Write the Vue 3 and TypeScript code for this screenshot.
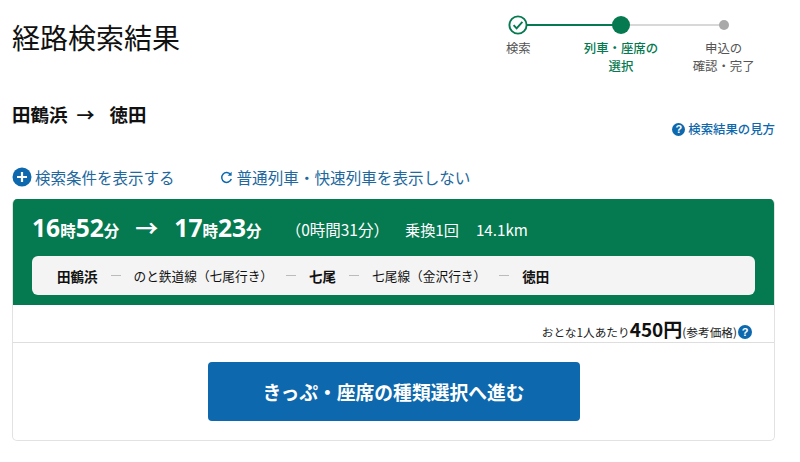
<script setup lang="ts">
interface Step { lines: string[]; state: string }
const steps: Step[] = [
  { lines: ['検索'], state: 'done' },
  { lines: ['列車・座席の', '選択'], state: 'current' },
  { lines: ['申込の', '確認・完了'], state: 'todo' },
]
</script>

<template>
  <div class="page">
    <header class="top">
      <h1 class="title">経路検索結果</h1>
      <div class="stepper">
        <div class="track">
          <span class="seg seg-done"></span>
          <span class="seg seg-todo"></span>
        </div>
        <div class="steps">
          <div v-for="s in steps" :key="s.lines[0]" class="step" :class="s.state">
            <div class="dot-wrap">
              <svg v-if="s.state === 'done'" width="20" height="20" viewBox="0 0 20 20">
                <circle cx="10" cy="10" r="8.6" fill="#fff" stroke="#05794f" stroke-width="1.9" />
                <path d="M5.6 10.2l3 3.2 5.8-6.6" fill="none" stroke="#05794f" stroke-width="1.9" />
              </svg>
              <span v-else class="dot"></span>
            </div>
            <div class="step-label">
              <div v-for="l in s.lines" :key="l">{{ l }}</div>
            </div>
          </div>
        </div>
      </div>
    </header>

    <div class="route-row">
      <div class="route">田鶴浜<span class="route-arrow">→</span>徳田</div>
      <a class="help"><span class="q q-sm">?</span>検索結果の見方</a>
    </div>

    <div class="links">
      <a class="link cond">
        <svg width="20" height="20" viewBox="0 0 20 20" class="plus">
          <circle cx="10" cy="10" r="9.5" fill="#0d68ad" />
          <path d="M5 10h10M10 5v10" stroke="#fff" stroke-width="2.2" />
        </svg>
        検索条件を表示する
      </a>
      <a class="link hide">
        <svg width="13" height="13" viewBox="0 0 13 13" class="reload">
          <path d="M10.6 3.6A4.9 4.9 0 1 0 11.3 8" fill="none" stroke="#0d68ad" stroke-width="1.5" />
          <path d="M11.6 0.8v4h-4z" fill="#0d68ad" />
        </svg>
        普通列車・快速列車を表示しない
      </a>
    </div>

    <section class="card">
      <div class="card-head">
        <div class="times">
          <span class="time"><b>16</b><i>時</i><b>52</b><i>分</i></span>
          <span class="arrow">→</span>
          <span class="time"><b>17</b><i>時</i><b>23</b><i>分</i></span>
          <span class="dur">（0時間31分）</span>
          <span class="meta">乗換1回</span>
          <span class="meta km">14.1km</span>
        </div>
        <div class="legs">
          <b class="st">田鶴浜</b><span class="dash"></span>
          <span class="line">のと鉄道線（七尾行き）</span><span class="dash"></span>
          <b class="st">七尾</b><span class="dash"></span>
          <span class="line">七尾線（金沢行き）</span><span class="dash"></span>
          <b class="st">徳田</b>
        </div>
      </div>
      <div class="price">
        <span>おとな1人あたり</span><strong>450円</strong><span class="ref">(参考価格)</span><span class="q q-md">?</span>
      </div>
      <div class="action">
        <button class="go" type="button">きっぷ・座席の種類選択へ進む</button>
      </div>
    </section>
  </div>
</template>

<style>
html, body { margin: 0; background: #fff; }
</style>

<style scoped>
.page {
  width: 800px;
  height: 462px;
  overflow: hidden;
  box-sizing: border-box;
  padding: 0 25px 0 12px;
  font-family: "Noto Sans CJK JP", "Noto Sans", sans-serif;
  color: #111;
}
.top { display: flex; justify-content: space-between; height: 90px; }
.title { margin: 17px 0 0; font-size: 28px; line-height: 40px; font-weight: 400; }
.stepper { position: relative; width: 308px; margin: 15px 0 0 0; }
.track { position: absolute; left: 51px; top: 9px; width: 206px; display: flex; height: 2px; }
.seg { display: block; flex: 1; height: 2px; }
.seg-done { background: #05794f; }
.seg-todo { background: #d8d8d8; }
.steps { display: grid; grid-template-columns: repeat(3, 1fr); position: relative; }
.step { display: flex; flex-direction: column; align-items: center; }
.dot-wrap { height: 20px; display: flex; align-items: center; justify-content: center; }
.dot { display: block; border-radius: 50%; }
.current .dot { width: 18px; height: 18px; background: #05794f; }
.todo .dot { width: 10px; height: 10px; background: #a9a9a9; }
.step-label { margin-top: 4px; font-size: 12.4px; line-height: 18px; text-align: center; color: #555; }
.current .step-label { color: #05794f; font-weight: 500; }
.route-row { display: flex; justify-content: space-between; height: 61px; }
.route { font-size: 18.5px; line-height: 24px; font-weight: 700; margin-top: 12px; }
.route-arrow { margin: 0 15px 0 9px; font-size: 18px; }
.help {
  display: flex; align-items: center; gap: 3px; height: 18px; margin-top: 30px;
  font-size: 12.4px; font-weight: 500; color: #0d68ad;
}
.q {
  display: inline-flex; align-items: center; justify-content: center; border-radius: 50%;
  background: #0d68ad; color: #fff; font-family: "Liberation Sans", sans-serif; font-weight: 700;
}
.q-sm { width: 13px; height: 13px; font-size: 11px; }
.q-md { width: 14px; height: 14px; font-size: 11px; margin-left: 1px; }
.links { display: flex; height: 48px; align-items: flex-start; padding-top: 15px; box-sizing: border-box; font-size: 15.5px; color: #22689e; }
.link { display: flex; align-items: center; line-height: 22px; }
.plus { margin-right: 3px; }
.hide { margin-left: 45px; font-size: 15.6px; }
.reload { margin-right: 4px; }
.card {
  width: 763px; height: 242px; box-sizing: border-box; display: flex; flex-direction: column;
  border: 1px solid #e2e2e2; border-top: 0; border-radius: 5px; overflow: hidden;
}
.card-head { background: #05794f; height: 106px; padding: 15px 20px 0; box-sizing: border-box; margin: 0 -1px; color: #fff; }
.times { display: flex; align-items: baseline; height: 27px; line-height: 27px; }
.time b { font-size: 24.6px; font-weight: 700; font-family: "Noto Sans", sans-serif; }
.time i { font-style: normal; font-size: 15.5px; font-weight: 700; }
.arrow { font-size: 23px; font-weight: 700; margin: 0 16px 0 16px; }
.dur { font-size: 15.5px; margin-left: 24px; position: relative; top: -1px; }
.meta { font-size: 15.2px; margin-left: 16px; position: relative; top: -1px; }
.km { margin-left: 17px; }
.legs {
  display: flex; align-items: center; margin-top: 15px; height: 39px; background: #f4f4f4; border-radius: 6px;
  padding: 0 25px; font-size: 12.7px; color: #111; width: 723px; box-sizing: border-box;
}
.st { font-weight: 700; font-size: 13.5px; }
.dash { display: block; width: 10px; height: 1px; background: #bbb; margin: 0 13px; }
.line { font-weight: 400; }
.price {
  height: 38px; box-sizing: border-box; border-bottom: 1px solid #dedede; display: flex; align-items: flex-end;
  justify-content: flex-end; padding: 0 22px 2px 0; font-size: 11.7px; line-height: 16px; color: #222;
}
.price strong { font-size: 19px; line-height: 22px; font-weight: 700; color: #111; }
.ref { font-size: 11.7px; }
.price .q-md { margin-bottom: 1px; }
.action { flex: 1; display: flex; justify-content: center; padding-top: 19px; }
.go {
  width: 372px; height: 59px; border: 0; border-radius: 4px; background: #0d68ad; color: #fff;
  font-family: inherit; font-size: 18.8px; font-weight: 700;
}
</style>
